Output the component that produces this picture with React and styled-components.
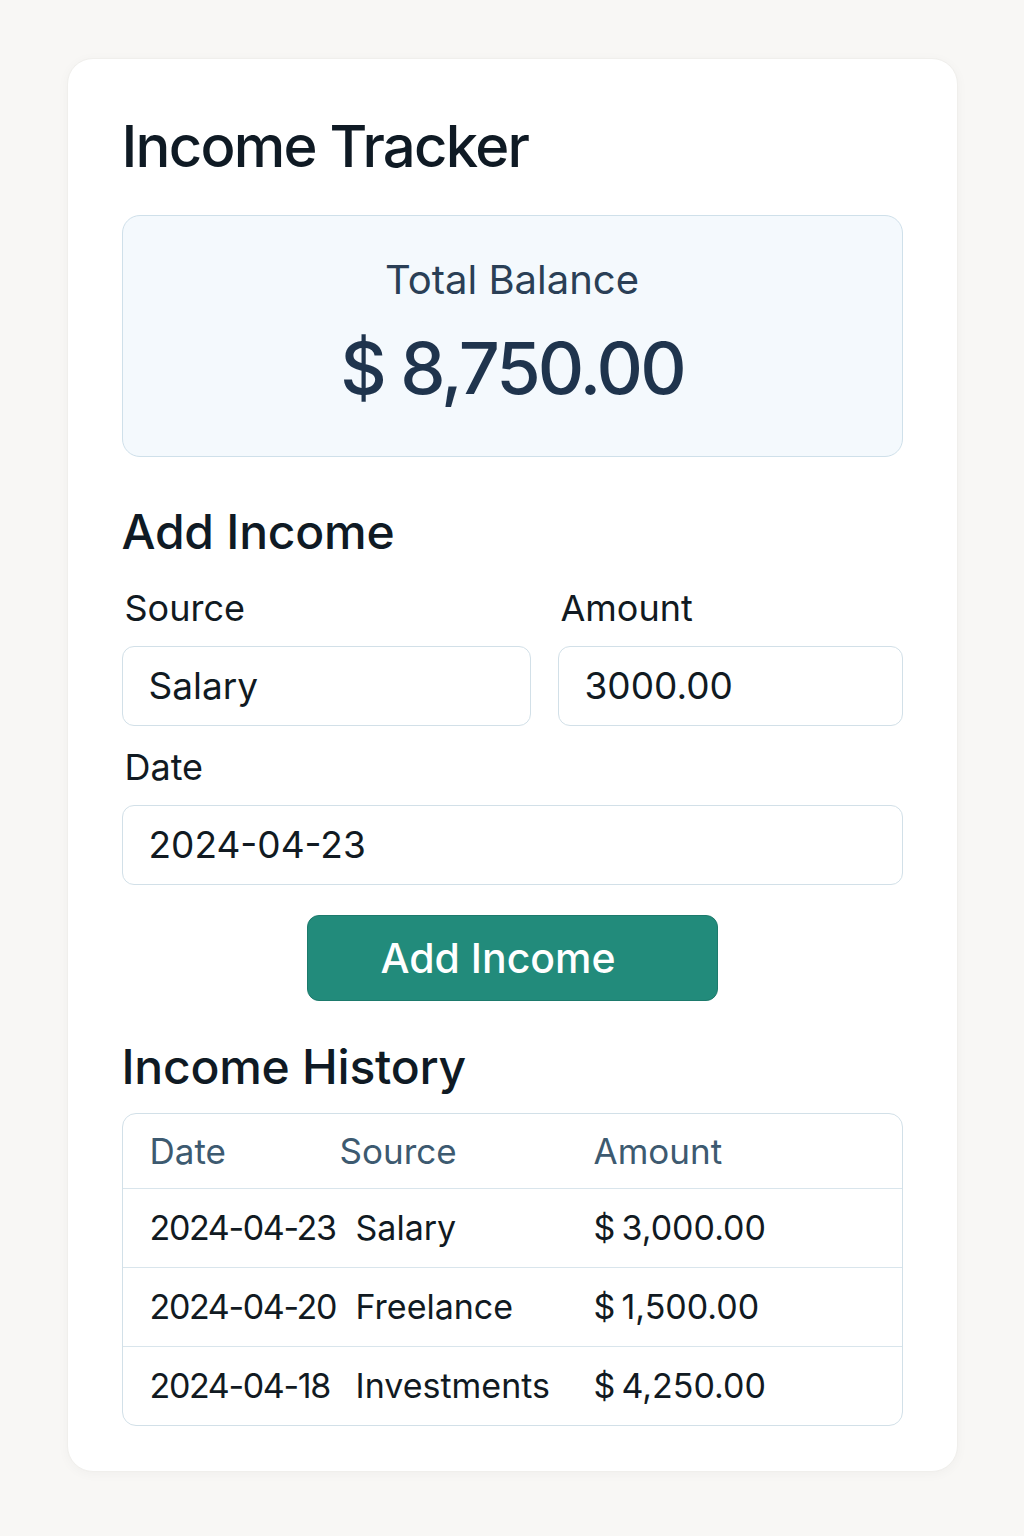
import React from 'react';
import styled, { createGlobalStyle } from 'styled-components';

const GlobalStyle = createGlobalStyle`
  html, body {
    margin: 0;
    padding: 0;
    background: #f8f7f5;
  }
  body {
    font-family: Inter, "Noto Sans", "Liberation Sans", sans-serif;
    color: #111a22;
  }
`;

const Page = styled.div`
  display: flex;
  justify-content: center;
  padding: 58px 0 64px;
`;

const Card = styled.div`
  width: 891px;
  box-sizing: border-box;
  background: #ffffff;
  border-radius: 26px;
  border: 1px solid #f0efec;
  box-shadow: 0 2px 12px rgba(0, 0, 0, 0.035);
  padding: 53px 54px 45px;
  display: flex;
  flex-direction: column;
`;

const Title = styled.h1`
  margin: 0;
  font-size: 58px;
  line-height: 1.2;
  font-weight: 500;
  letter-spacing: -0.03em;
  color: #0f1a24;
`;

const BalanceBox = styled.div`
  margin-top: 33px;
  background: #f4f9fd;
  border: 1px solid #cfe0ea;
  border-radius: 18px;
  padding: 40px 20px 45px;
  display: flex;
  flex-direction: column;
  align-items: center;
  gap: 21px;
`;

const BalanceLabel = styled.div`
  font-size: 40px;
  line-height: 1.2;
  color: #2a3f56;
`;

const BalanceAmount = styled.div`
  font-size: 72px;
  line-height: 1.2;
  font-weight: 500;
  letter-spacing: -0.04em;
  color: #1f344d;
`;

const Heading = styled.h2`
  margin: ${p => p.$top}px 0 0;
  font-size: 48px;
  line-height: 1.2;
  font-weight: 500;
  letter-spacing: -0.005em;
  color: #0f1a24;
`;

const FieldRow = styled.div`
  display: grid;
  grid-template-columns: ${p => p.$cols};
  gap: 27px;
  margin-top: ${p => p.$top}px;
`;

const Field = styled.label`
  display: flex;
  flex-direction: column;
  gap: 16px;
`;

const Label = styled.span`
  font-size: 36px;
  line-height: 1.2;
  color: #111a22;
  padding-left: 3px;
`;

const Input = styled.input`
  box-sizing: border-box;
  height: 80px;
  width: 100%;
  border: 1.5px solid #d2e0e8;
  border-radius: 12px;
  padding: 0 26px;
  font: inherit;
  font-size: 37px;
  color: #111a22;
  background: #ffffff;
  outline: none;
`;

const ButtonRow = styled.div`
  display: flex;
  justify-content: center;
  margin-top: 30px;
`;

const Button = styled.button`
  width: 411px;
  height: 86px;
  border-radius: 12px;
  border: 1px solid #1d7a6c;
  background: #228b7b;
  color: #ffffff;
  font: inherit;
  font-size: 41px;
  font-weight: 500;
  padding: 0 28px 0 0;
  cursor: pointer;
`;

const Table = styled.div`
  margin-top: 17px;
  border: 1.5px solid #d2e0e8;
  border-radius: 14px;
  overflow: hidden;
`;

const Row = styled.div`
  display: grid;
  grid-template-columns: ${p => (p.$head ? '190px 254px 1fr' : '206px 238px 1fr')};
  align-items: center;
  height: ${p => (p.$head ? 74 : 78)}px;
  padding-left: 27px;
  font-size: ${p => (p.$head ? 35 : 34)}px;
  color: ${p => (p.$head ? '#3d5a70' : '#111a22')};
  & + & {
    border-top: 1.5px solid #d9e5ec;
  }
`;

const DateCell = styled.span`
  letter-spacing: ${p => (p.$tight ? '-0.04em' : 'normal')};
`;

const rows = [
  { date: '2024-04-23', source: 'Salary', amount: '$\u20093,000.00' },
  { date: '2024-04-20', source: 'Freelance', amount: '$\u20091,500.00' },
  { date: '2024-04-18', source: 'Investments', amount: '$\u20094,250.00' },
];

export default function App() {
  return (
    <>
      <GlobalStyle />
      <Page>
        <Card>
          <Title>Income Tracker</Title>
          <BalanceBox>
            <BalanceLabel>Total Balance</BalanceLabel>
            <BalanceAmount>$ 8,750.00</BalanceAmount>
          </BalanceBox>

          <Heading $top={46}>Add Income</Heading>
          <FieldRow $cols="409px 1fr" $top={26}>
            <Field>
              <Label>Source</Label>
              <Input readOnly defaultValue="Salary" />
            </Field>
            <Field>
              <Label>Amount</Label>
              <Input readOnly defaultValue="3000.00" />
            </Field>
          </FieldRow>
          <FieldRow $cols="1fr" $top={20}>
            <Field>
              <Label>Date</Label>
              <Input readOnly defaultValue="2024-04-23" />
            </Field>
          </FieldRow>
          <ButtonRow>
            <Button type="button">Add Income</Button>
          </ButtonRow>

          <Heading $top={37}>Income History</Heading>
          <Table>
            <Row $head>
              <DateCell>Date</DateCell>
              <span>Source</span>
              <span>Amount</span>
            </Row>
            {rows.map(r => (
              <Row key={r.date}>
                <DateCell $tight>{r.date}</DateCell>
                <span>{r.source}</span>
                <span>{r.amount}</span>
              </Row>
            ))}
          </Table>
        </Card>
      </Page>
    </>
  );
}
